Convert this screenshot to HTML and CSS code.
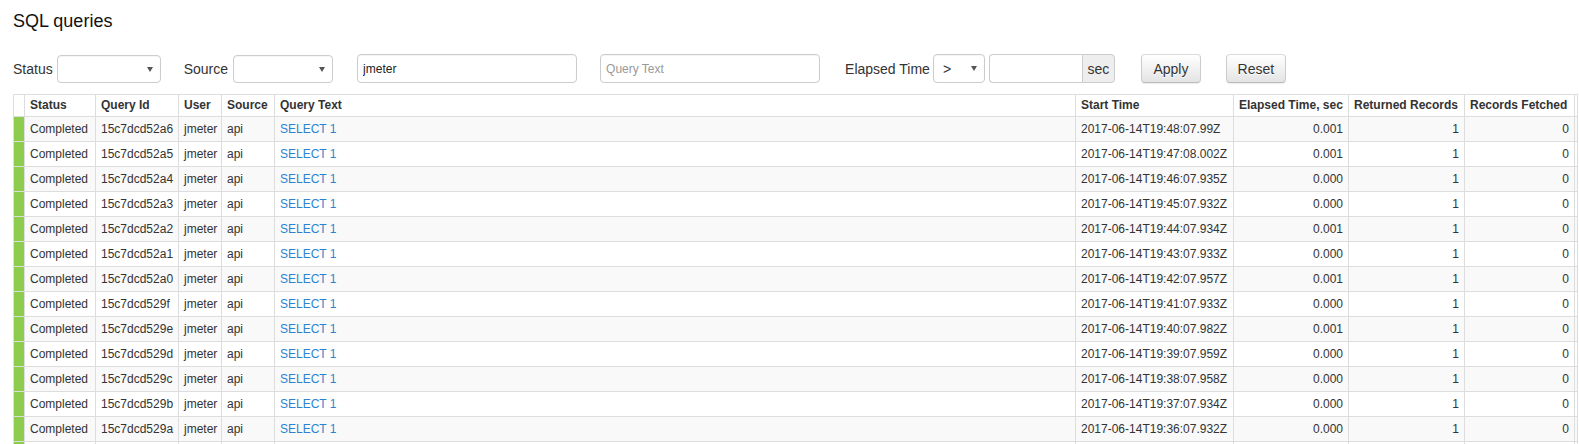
FILE: index.html
```html
<!DOCTYPE html>
<html lang="en">
<head>
<meta charset="utf-8">
<title>SQL queries</title>
<link rel="stylesheet" href="styles.css">
</head>
<body>
<div class="page">
  <h1 class="title">SQL queries</h1>
  <div class="filters">
    <div class="group g-status">
      <label class="lbl">Status</label>
      <span class="sel sel-status"><select><option></option></select></span>
    </div>
    <div class="group g-source">
      <label class="lbl">Source</label>
      <span class="sel sel-source"><select><option></option></select></span>
    </div>
    <input class="inp inp-user" type="text" value="jmeter">
    <input class="inp inp-text" type="text" placeholder="Query Text">
    <div class="group g-elapsed">
      <label class="lbl">Elapsed Time</label>
      <span class="sel sel-op"><select><option>&gt;</option></select></span>
      <div class="input-group">
        <input class="inp-sec" type="text">
        <span class="addon">sec</span>
      </div>
    </div>
    <button class="btn btn-apply">Apply</button>
    <button class="btn btn-reset">Reset</button>
  </div>
  <div class="table-wrap">
    <table class="grid">
      <colgroup>
        <col class="c-state"><col class="c-status"><col class="c-id"><col class="c-user"><col class="c-source"><col class="c-text"><col class="c-start"><col class="c-elapsed"><col class="c-returned"><col class="c-fetched"><col class="c-extra">
      </colgroup>
      <thead>
        <tr><th></th><th>Status</th><th>Query Id</th><th>User</th><th>Source</th><th>Query Text</th><th>Start Time</th><th>Elapsed Time, sec</th><th>Returned Records</th><th>Records Fetched</th><th></th></tr>
      </thead>
      <tbody>
        <tr><td class="state"></td><td>Completed</td><td>15c7dcd52a6</td><td>jmeter</td><td>api</td><td><a href="#">SELECT 1</a></td><td>2017-06-14T19:48:07.99Z</td><td class="num">0.001</td><td class="num">1</td><td class="num">0</td><td></td></tr>
        <tr><td class="state"></td><td>Completed</td><td>15c7dcd52a5</td><td>jmeter</td><td>api</td><td><a href="#">SELECT 1</a></td><td>2017-06-14T19:47:08.002Z</td><td class="num">0.001</td><td class="num">1</td><td class="num">0</td><td></td></tr>
        <tr><td class="state"></td><td>Completed</td><td>15c7dcd52a4</td><td>jmeter</td><td>api</td><td><a href="#">SELECT 1</a></td><td>2017-06-14T19:46:07.935Z</td><td class="num">0.000</td><td class="num">1</td><td class="num">0</td><td></td></tr>
        <tr><td class="state"></td><td>Completed</td><td>15c7dcd52a3</td><td>jmeter</td><td>api</td><td><a href="#">SELECT 1</a></td><td>2017-06-14T19:45:07.932Z</td><td class="num">0.000</td><td class="num">1</td><td class="num">0</td><td></td></tr>
        <tr><td class="state"></td><td>Completed</td><td>15c7dcd52a2</td><td>jmeter</td><td>api</td><td><a href="#">SELECT 1</a></td><td>2017-06-14T19:44:07.934Z</td><td class="num">0.001</td><td class="num">1</td><td class="num">0</td><td></td></tr>
        <tr><td class="state"></td><td>Completed</td><td>15c7dcd52a1</td><td>jmeter</td><td>api</td><td><a href="#">SELECT 1</a></td><td>2017-06-14T19:43:07.933Z</td><td class="num">0.000</td><td class="num">1</td><td class="num">0</td><td></td></tr>
        <tr><td class="state"></td><td>Completed</td><td>15c7dcd52a0</td><td>jmeter</td><td>api</td><td><a href="#">SELECT 1</a></td><td>2017-06-14T19:42:07.957Z</td><td class="num">0.001</td><td class="num">1</td><td class="num">0</td><td></td></tr>
        <tr><td class="state"></td><td>Completed</td><td>15c7dcd529f</td><td>jmeter</td><td>api</td><td><a href="#">SELECT 1</a></td><td>2017-06-14T19:41:07.933Z</td><td class="num">0.000</td><td class="num">1</td><td class="num">0</td><td></td></tr>
        <tr><td class="state"></td><td>Completed</td><td>15c7dcd529e</td><td>jmeter</td><td>api</td><td><a href="#">SELECT 1</a></td><td>2017-06-14T19:40:07.982Z</td><td class="num">0.001</td><td class="num">1</td><td class="num">0</td><td></td></tr>
        <tr><td class="state"></td><td>Completed</td><td>15c7dcd529d</td><td>jmeter</td><td>api</td><td><a href="#">SELECT 1</a></td><td>2017-06-14T19:39:07.959Z</td><td class="num">0.000</td><td class="num">1</td><td class="num">0</td><td></td></tr>
        <tr><td class="state"></td><td>Completed</td><td>15c7dcd529c</td><td>jmeter</td><td>api</td><td><a href="#">SELECT 1</a></td><td>2017-06-14T19:38:07.958Z</td><td class="num">0.000</td><td class="num">1</td><td class="num">0</td><td></td></tr>
        <tr><td class="state"></td><td>Completed</td><td>15c7dcd529b</td><td>jmeter</td><td>api</td><td><a href="#">SELECT 1</a></td><td>2017-06-14T19:37:07.934Z</td><td class="num">0.000</td><td class="num">1</td><td class="num">0</td><td></td></tr>
        <tr><td class="state"></td><td>Completed</td><td>15c7dcd529a</td><td>jmeter</td><td>api</td><td><a href="#">SELECT 1</a></td><td>2017-06-14T19:36:07.932Z</td><td class="num">0.000</td><td class="num">1</td><td class="num">0</td><td></td></tr>
        <tr class="row-edge"><td class="state"></td><td></td><td></td><td></td><td></td><td></td><td></td><td></td><td></td><td></td><td></td></tr>
      </tbody>
    </table>
  </div>
</div>
</body>
</html>
```
FILE: styles.css
```css
html, body {
  margin: 0;
  padding: 0;
  overflow: hidden;
  background: #fff;
}
body {
  font-family: "Liberation Sans", Arial, sans-serif;
  color: #333;
  font-size: 14px;
}
.page {
  padding: 0 0 0 13px;
}
.title {
  margin: 0;
  padding-top: 11px;
  font-size: 18px;
  line-height: 20px;
  font-weight: normal;
  color: #111;
}
.filters {
  display: flex;
  align-items: center;
  margin-top: 23px;
  height: 29px;
}
.group {
  display: flex;
  align-items: center;
}
.lbl {
  font-size: 14px;
  color: #333;
  line-height: 20px;
}
.g-status .lbl { margin-right: 4px; }
.g-source { margin-left: 23px; }
.g-source .lbl { margin-right: 5px; }
.sel {
  position: relative;
  display: inline-block;
}
.sel select {
  -webkit-appearance: none;
  appearance: none;
  box-sizing: border-box;
  height: 28px;
  border: 1px solid #ccc;
  border-radius: 4px;
  background: #fff;
  font-family: "Liberation Sans", Arial, sans-serif;
  font-size: 14px;
  color: #333;
  padding: 0 20px 0 9px;
  box-shadow: inset 0 1px 1px rgba(0,0,0,.04);
}
.sel::after {
  content: "";
  position: absolute;
  right: 8px;
  top: 12px;
  border-left: 3px solid transparent;
  border-right: 3px solid transparent;
  border-top: 5px solid #555;
  pointer-events: none;
}
.sel-status select { width: 104px; }
.sel-source select { width: 100px; }
.sel-op select { width: 52px; height: 29px; }
.sel-op::after { top: 12px; }
.inp {
  box-sizing: border-box;
  height: 29px;
  width: 220px;
  border: 1px solid #ccc;
  border-radius: 4px;
  padding: 0 5px;
  font-family: "Liberation Sans", Arial, sans-serif;
  font-size: 12px;
  color: #222;
  box-shadow: inset 0 1px 1px rgba(0,0,0,.04);
}
.inp::placeholder { color: #999; }
.inp-user { margin-left: 24px; }
.inp-text { margin-left: 23px; }
.g-elapsed { margin-left: 25px; }
.g-elapsed .lbl { margin-right: 3px; }
.input-group {
  display: flex;
  margin-left: 4px;
  height: 29px;
}
.inp-sec {
  box-sizing: border-box;
  width: 93px;
  height: 29px;
  border: 1px solid #ccc;
  border-right: 0;
  border-radius: 4px 0 0 4px;
  padding: 0 5px;
  font-size: 12px;
}
.addon {
  box-sizing: border-box;
  width: 33px;
  height: 29px;
  border: 1px solid #ccc;
  border-radius: 0 4px 4px 0;
  background: #eee;
  font-size: 14px;
  color: #333;
  display: flex;
  align-items: center;
  justify-content: center;
}
.btn {
  box-sizing: border-box;
  width: 60px;
  height: 29px;
  border: 1px solid #ccc;
  border-color: #dbdbdb #ccc #bbb;
  border-radius: 4px;
  background: linear-gradient(to bottom, #fff 0, #e4e4e4 100%);
  box-shadow: inset 0 1px 0 rgba(255,255,255,.15), 0 1px 1px rgba(0,0,0,.075);
  font-family: "Liberation Sans", Arial, sans-serif;
  font-size: 14px;
  color: #333;
  text-shadow: 0 1px 0 #fff;
  padding: 0;
}
.btn-apply { margin-left: 26px; }
.btn-reset { margin-left: 25px; }
.table-wrap {
  margin-top: 11px;
  overflow: hidden;
}
.grid {
  border-collapse: collapse;
  table-layout: fixed;
  width: 1564px;
  font-size: 12px;
  color: #333;
}
.c-state { width: 11px; }
.c-status { width: 71px; }
.c-id { width: 83px; }
.c-user { width: 43px; }
.c-source { width: 53px; }
.c-text { width: 801px; }
.c-start { width: 158px; }
.c-elapsed { width: 115px; }
.c-returned { width: 116px; }
.c-fetched { width: 110px; }
.c-extra { width: 3px; }
.grid th, .grid td {
  border: 1px solid #ddd;
  line-height: 16px;
  white-space: nowrap;
  overflow: hidden;
  text-align: left;
}
.grid th {
  padding: 2px 5px 3px;
  font-weight: bold;
  background: #fff;
}
.grid td {
  padding: 4px 5px;
}
.grid tbody tr:nth-child(odd) td { background: #f9f9f9; }
.grid tbody tr td.state { background: #8dcc4d; padding: 0; }
.grid td.num { text-align: right; }
.grid a {
  color: #2a84d2;
  text-decoration: none;
}
```
